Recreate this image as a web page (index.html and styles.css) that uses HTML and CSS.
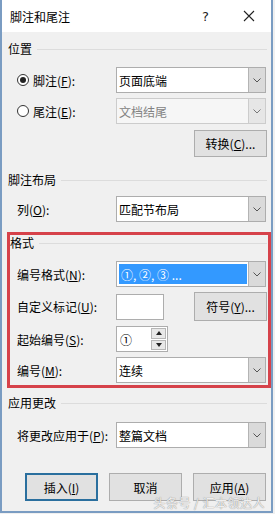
FILE: index.html
```html
<!DOCTYPE html>
<html lang="zh">
<head>
<meta charset="utf-8">
<link rel="stylesheet" href="styles.css">
</head>
<body>
<div class="window">
  <div class="titlebar">
    <span class="title">脚注和尾注</span>
    <span class="help">?</span>
    <svg class="close" width="12" height="12" viewBox="0 0 12 12"><path d="M1 1L11 11M11 1L1 11" stroke="#222" stroke-width="1.1" fill="none"/></svg>
  </div>
  <div class="content">
    <div class="group-title g1"><span>位置</span><i></i></div>
    <div class="row r1">
      <span class="radio on"></span><span class="lbl lbl-radio">脚注(<u>F</u>):</span>
      <div class="select"><span class="val">页面底端</span><span class="arrow"><svg width="8" height="5" viewBox="0 0 8 5"><path d="M0.5 0.5L4 4L7.5 0.5" stroke="#555" fill="none"/></svg></span></div>
    </div>
    <div class="row r2">
      <span class="radio"></span><span class="lbl lbl-radio">尾注(<u>E</u>):</span>
      <div class="select disabled"><span class="val">文档结尾</span><span class="arrow"><svg width="8" height="5" viewBox="0 0 8 5"><path d="M0.5 0.5L4 4L7.5 0.5" stroke="#777" fill="none"/></svg></span></div>
    </div>
    <div class="row r3 right"><button class="btn">转换(<u>C</u>)...</button></div>

    <div class="group-title g2"><span>脚注布局</span><i></i></div>
    <div class="row r4">
      <span class="lbl">列(<u>O</u>):</span>
      <div class="select"><span class="val">匹配节布局</span><span class="arrow"><svg width="8" height="5" viewBox="0 0 8 5"><path d="M0.5 0.5L4 4L7.5 0.5" stroke="#555" fill="none"/></svg></span></div>
    </div>

    <div class="redbox">
      <div class="group-title g3"><span>格式</span><i></i></div>
      <div class="row r5">
        <span class="lbl">编号格式(<u>N</u>):</span>
        <div class="select focus"><span class="val hl">①, ②, ③ ...</span><span class="arrow"><svg width="8" height="5" viewBox="0 0 8 5"><path d="M0.5 0.5L4 4L7.5 0.5" stroke="#555" fill="none"/></svg></span></div>
      </div>
      <div class="row r6">
        <span class="lbl">自定义标记(<u>U</u>):</span>
        <div class="input small"></div>
        <button class="btn sym">符号(<u>Y</u>)...</button>
      </div>
      <div class="row r7">
        <span class="lbl">起始编号(<u>S</u>):</span>
        <div class="input spin"><span class="val">①</span>
          <span class="spinbtns">
            <span class="sb"><svg width="6" height="4" viewBox="0 0 6 4"><path d="M0 4L3 0L6 4Z" fill="#222"/></svg></span>
            <span class="sb"><svg width="6" height="4" viewBox="0 0 6 4"><path d="M0 0L3 4L6 0Z" fill="#222"/></svg></span>
          </span>
        </div>
      </div>
      <div class="row r8">
        <span class="lbl">编号(<u>M</u>):</span>
        <div class="select"><span class="val">连续</span><span class="arrow"><svg width="8" height="5" viewBox="0 0 8 5"><path d="M0.5 0.5L4 4L7.5 0.5" stroke="#555" fill="none"/></svg></span></div>
      </div>
    </div>

    <div class="group-title g4"><span>应用更改</span><i></i></div>
    <div class="row r9">
      <span class="lbl">将更改应用于(<u>P</u>):</span>
      <div class="select"><span class="val">整篇文档</span><span class="arrow"><svg width="8" height="5" viewBox="0 0 8 5"><path d="M0.5 0.5L4 4L7.5 0.5" stroke="#555" fill="none"/></svg></span></div>
    </div>
    <div class="buttons">
      <button class="btn big default">插入(<u>I</u>)</button>
      <button class="btn big">取消</button>
      <button class="btn big">应用(<u>A</u>)</button>
    </div>
  </div>
  <div class="watermark">头条号 / 汇本领达人</div>
</div>
</body>
</html>
```

FILE: styles.css
```css
* { box-sizing: border-box; }
html, body { margin: 0; padding: 0; }
body {
  width: 275px;
  height: 514px;
  background: #f0f0f0;
  font-family: "Noto Sans CJK SC", "Noto Sans", sans-serif;
  font-size: 12px;
  color: #000;
  overflow: hidden;
}
.window {
  position: relative;
  width: 273px;
  height: 513px;
  border-left: 2px solid #7a9cc2;
  border-right: 2px solid #7a9cc2;
  border-bottom: 2px solid #7a9cc2;
  background: #f0f0f0;
  display: flex;
  flex-direction: column;
}
.titlebar {
  height: 32px;
  background: #fff;
  display: flex;
  align-items: center;
  padding-left: 8px;
  flex-shrink: 0;
}
.title { font-size: 12px; flex: 1; }
.help { font-size: 13px; color: #222; margin-right: 34px; font-family: "DejaVu Sans", sans-serif; }
.close { margin-right: 16px; }
.content {
  display: flex;
  flex-direction: column;
}
.group-title {
  height: 16px;
  line-height: 16px;
  display: flex;
  align-items: center;
  padding-left: 6px;
  padding-right: 4px;
}
.group-title i {
  flex: 1;
  height: 1px;
  background: #dcdcdc;
  margin-left: 5px;
}
.g1 { margin-top: 9px; }
.g2 { margin-top: 15px; }
.g3 { margin-top: 0; padding-left: 0; padding-right: 1px; }
.g4 { margin-top: 7px; }

.row {
  display: flex;
  align-items: center;
  height: 26px;
  padding-left: 15px;
}
.r1 { margin-top: 10px; }
.r2 { margin-top: 5px; }
.r3 { margin-top: 6px; height: 27px; justify-content: flex-end; padding-right: 4px; }
.r4 { margin-top: 8px; }
.redbox .row { padding-left: 7px; }
.r5 { margin-top: 10px; }
.r6 { margin-top: 6px; height: 27px; }
.r7 { margin-top: 6px; }
.r8 { margin-top: 5px; }
.r9 { margin-top: 11px; }

.lbl { width: 99px; flex-shrink: 0; white-space: nowrap; }
.lbl-radio { width: 83px; }
.radio {
  width: 12px;
  height: 12px;
  border: 1px solid #333;
  border-radius: 50%;
  margin-right: 4px;
  background: #fff;
  display: flex;
  align-items: center;
  justify-content: center;
  flex-shrink: 0;
}
.radio.on::after {
  content: "";
  width: 6px;
  height: 6px;
  border-radius: 50%;
  background: #222;
}
.select {
  width: 150px;
  height: 26px;
  border: 1px solid #adadad;
  background: #fff;
  display: flex;
  align-items: stretch;
}
.select .val {
  flex: 1;
  display: flex;
  align-items: center;
  padding-left: 2px;
}
.select .arrow {
  width: 17px;
  background: #dadada;
  border-left: 1px solid #b4b4b4;
  display: flex;
  align-items: center;
  justify-content: center;
}
.select.disabled { border-color: #cccccc; background: #f6f6f6; color: #838383; }
.select.disabled .arrow { background: #e6e6e6; border-left-color: #cccccc; }
.select.focus { padding: 2px 0 2px 2px; }
.select.focus .val.hl {
  background: #3399ff;
  color: #fff;
  margin-right: 1px;
}
.select.focus .arrow { margin: -2px 0; }
.input {
  height: 26px;
  border: 1px solid #adadad;
  background: #fff;
}
.input.small { width: 48px; }
.input.spin {
  width: 52px;
  display: flex;
  align-items: center;
  padding-left: 3px;
  position: relative;
}
.input.spin .val { flex: 1; }
.spinbtns {
  display: flex;
  flex-direction: column;
  gap: 1px;
  padding: 1px;
  align-self: stretch;
}
.sb {
  flex: 1;
  width: 15px;
  background: #e8e8e8;
  border: 1px solid #b6b6b6;
  display: flex;
  align-items: center;
  justify-content: center;
}
.btn {
  font-family: "Noto Sans CJK SC", "Noto Sans", sans-serif;
  font-size: 12px;
  color: #000;
  background: #e1e1e1;
  border: 1px solid #adadad;
  height: 27px;
  width: 73px;
  padding: 0;
  display: flex;
  align-items: center;
  justify-content: center;
}
.sym { height: 29px; margin-left: 30px; }
.buttons {
  display: flex;
  gap: 11px;
  padding-left: 23px;
  margin-top: 25px;
}
.btn.big { height: 28px; }
.btn.default { border: 2px solid #2a6f9e; }
.redbox {
  margin-left: 5px;
  width: 264px;
  border: 3px solid #d6424a;
  padding-bottom: 2px;
  margin-top: 10px;
  display: flex;
  flex-direction: column;
}
.redbox .group-title { padding-left: 0; }
.watermark {
  position: absolute;
  right: 6px;
  bottom: 0px;
  font-size: 12px;
  color: rgba(255,255,255,0.85);
  text-shadow: 0 0 1px #9a9a9a, 0 0 1px #9a9a9a;
  letter-spacing: 0.5px;
}
u { text-decoration: underline; text-underline-offset: 1px; }
```
